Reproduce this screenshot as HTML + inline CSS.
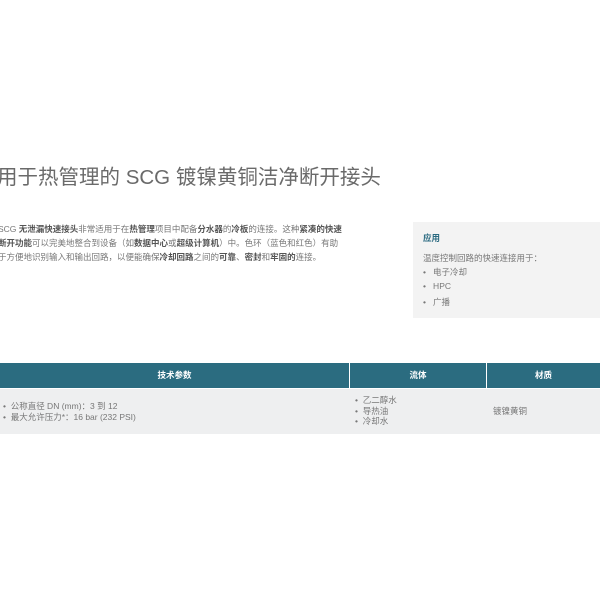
<!DOCTYPE html>
<html><head><meta charset="utf-8"><style>
body{margin:0;width:600px;height:600px;background:#fff;position:relative;overflow:hidden;font-family:"Liberation Sans","Noto Sans CJK SC",sans-serif;color:#666}
.t{position:absolute;left:-3px;top:160px;font-size:20.5px;color:#6a6a6a;white-space:nowrap}
.p{position:absolute;left:-2px;top:222px;width:344px;font-size:8.5px;line-height:14px;color:#777}
.p b{color:#555}
.box{position:absolute;left:413px;top:222px;width:187px;height:96px;background:#f3f3f3;font-size:8.5px;color:#777}
.box .h{position:absolute;left:10px;top:10px;color:#2a6a80;font-weight:bold}
.box div{position:absolute;left:10px}
.hd{position:absolute;top:363px;height:25px;background:#2b6c80;color:#fff;font-weight:bold;font-size:8.5px;line-height:25px;text-align:center}
.bd{position:absolute;top:389px;height:45px;background:#eeeff0;font-size:8.5px;color:#777;line-height:10.5px}
</style></head><body>
<div class="t">用于热管理的 SCG 镀镍黄铜洁净断开接头</div>
<div class="p">SCG <b>无泄漏快速接头</b>非常适用于在<b>热管理</b>项目中配备<b>分水器</b>的<b>冷板</b>的连接。这种<b>紧凑的快速<br>断开功能</b>可以完美地整合到设备（如<b>数据中心</b>或<b>超级计算机</b>）中。色环（蓝色和红色）有助<br>于方便地识别输入和输出回路，以便能确保<b>冷却回路</b>之间的<b>可靠</b>、<b>密封</b>和<b>牢固的</b>连接。</div>
<div class="box"><span class="h">应用</span>
<div style="top:30px">温度控制回路的快速连接用于：</div>
<div style="top:44px">•&nbsp;&nbsp;&nbsp;电子冷却</div>
<div style="top:59px">•&nbsp;&nbsp;&nbsp;HPC</div>
<div style="top:74px">•&nbsp;&nbsp;&nbsp;广播</div></div>
<div class="hd" style="left:0;width:349px">技术参数</div>
<div class="hd" style="left:350px;width:136px">流体</div>
<div class="hd" style="left:487px;width:113px">材质</div>
<div class="bd" style="left:0;width:349px;padding-top:12px;height:33px;padding-left:3px;box-sizing:content-box">•&nbsp;&nbsp;公称直径 DN (mm)：3 到 12<br>•&nbsp;&nbsp;最大允许压力*：16 bar (232 PSI)</div>
<div class="bd" style="left:350px;width:132px;padding-left:5px;padding-top:6px;height:39px">•&nbsp;&nbsp;乙二醇水<br>•&nbsp;&nbsp;导热油<br>•&nbsp;&nbsp;冷却水</div>
<div class="bd" style="left:487px;width:107px;padding-left:6px;line-height:45px">镀镍黄铜</div>
</body></html>
